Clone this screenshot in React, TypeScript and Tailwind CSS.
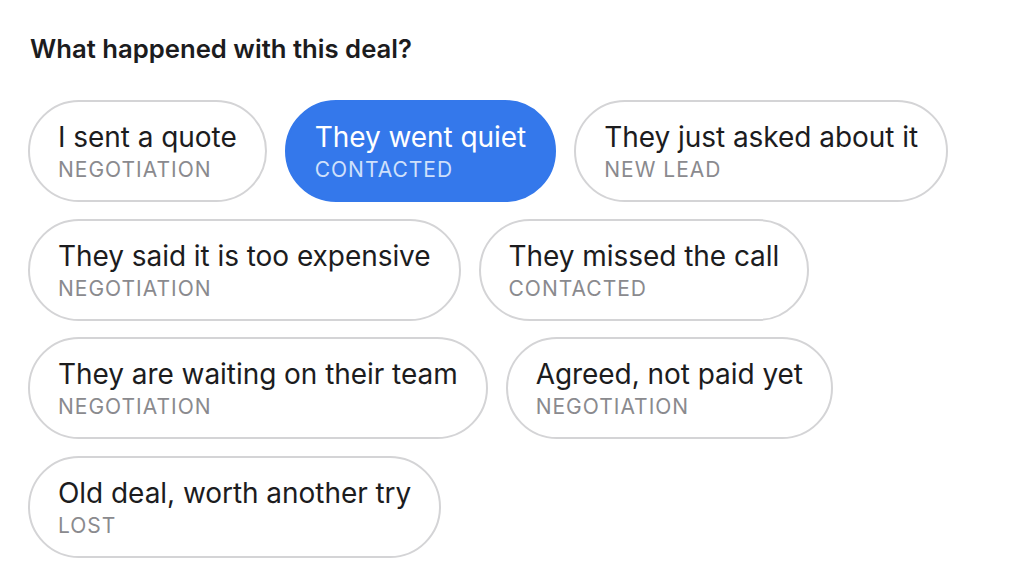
const options = [
  { title: 'I sent a quote', stage: 'NEGOTIATION' },
  { title: 'They went quiet', stage: 'CONTACTED', active: true },
  { title: 'They just asked about it', stage: 'NEW LEAD' },
  { title: 'They said it is too expensive', stage: 'NEGOTIATION' },
  { title: 'They missed the call', stage: 'CONTACTED' },
  { title: 'They are waiting on their team', stage: 'NEGOTIATION' },
  { title: 'Agreed, not paid yet', stage: 'NEGOTIATION' },
  { title: 'Old deal, worth another try', stage: 'LOST' },
]

function OptionPill({ title, stage, active }: { title: string; stage: string; active?: boolean }) {
  return (
    <button
      className={
        active
          ? 'flex flex-col items-start rounded-full border-2 border-[#3478eb] bg-[#3478eb] px-[28px] pt-[18px] pb-[17px] text-left'
          : 'flex flex-col items-start rounded-full border-2 border-[#d4d4d6] bg-white px-[28px] pt-[18px] pb-[17px] text-left'
      }
    >
      <span
        className={
          active
            ? 'text-[28px] leading-[34px] tracking-[-0.05px] text-white'
            : 'text-[28px] leading-[34px] tracking-[-0.05px] text-[#1c1c1e]'
        }
      >
        {title}
      </span>
      <span
        className={
          active
            ? 'mt-[3px] text-[21px] leading-[26px] tracking-[1px] text-[#cfe0fb]'
            : 'mt-[3px] text-[21px] leading-[26px] tracking-[1px] text-[#8a8a8e]'
        }
      >
        {stage}
      </span>
    </button>
  )
}

export default function App() {
  return (
    <div className="min-h-screen bg-white px-[28px] pt-[34px] font-['Inter',sans-serif]">
      <h2 className="pl-[2px] text-[25.7px] font-semibold leading-[30px] text-[#1c1c1e]">
        What happened with this deal?
      </h2>
      <div className="mt-[36px] flex max-w-[960px] flex-wrap gap-x-[18px] gap-y-[16.5px]">
        {options.map((o) => (
          <OptionPill key={o.title} {...o} />
        ))}
      </div>
    </div>
  )
}
